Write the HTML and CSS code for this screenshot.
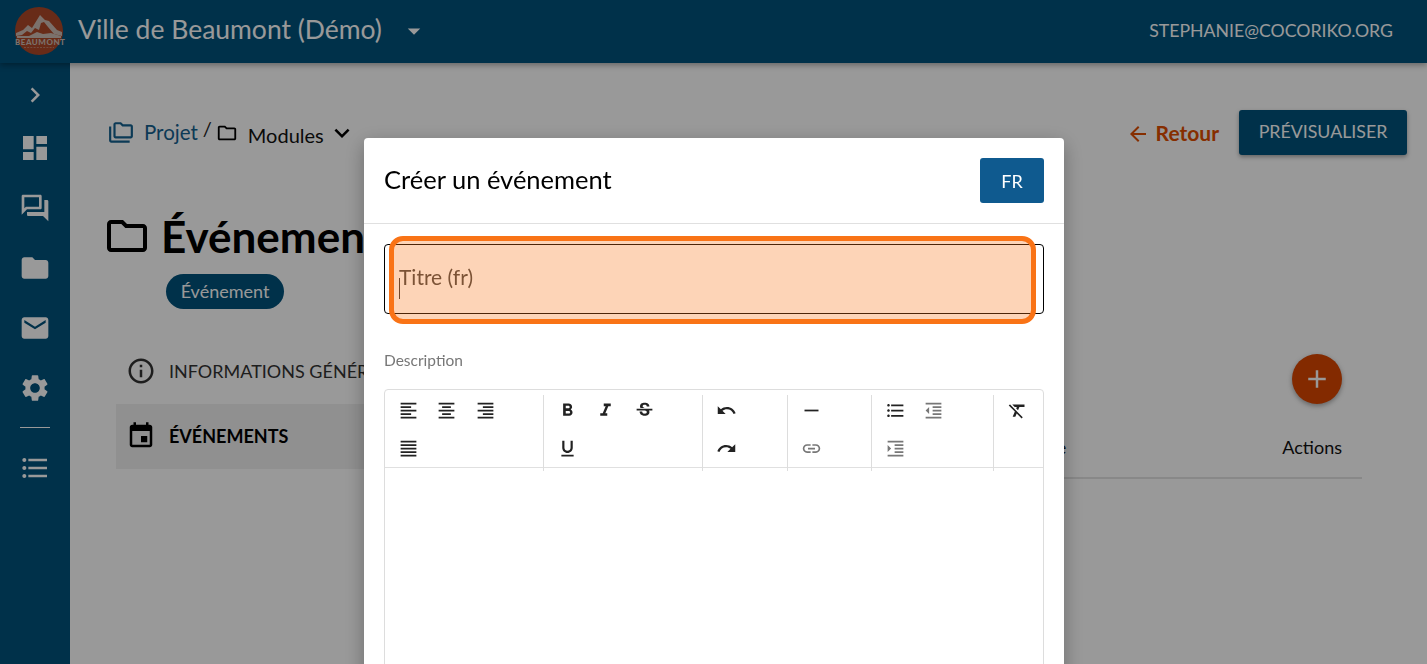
FILE: index.html
```html
<!DOCTYPE html>
<html lang="fr">
<head>
<meta charset="utf-8">
<title>Créer un événement</title>
<link rel="stylesheet" href="styles.css">
</head>
<body>
<svg class="sprite" aria-hidden="true">
  <symbol id="i-dash" viewBox="0 0 24 24"><path d="M3 13h8V3H3v10zm0 8h8v-6H3v6zm10 0h8V11h-8v10zm0-18v6h8V3h-8z"/></symbol>
  <symbol id="i-forum" viewBox="0 0 24 24"><path d="M15 4v7H5.17L4 12.17V4h11m1-2H3c-.55 0-1 .45-1 1v14l4-4h10c.55 0 1-.45 1-1V3c0-.55-.45-1-1-1zm5 4h-2v9H6v2c0 .55.45 1 1 1h11l4 4V7c0-.55-.45-1-1-1z"/></symbol>
  <symbol id="i-folder" viewBox="0 0 24 24"><path d="M10 4H4c-1.1 0-1.99.9-1.99 2L2 18c0 1.1.9 2 2 2h16c1.1 0 2-.9 2-2V8c0-1.1-.9-2-2-2h-8l-2-2z"/></symbol>
  <symbol id="i-folder-o" viewBox="0 0 24 24"><path d="M9.17 6l2 2H20v10H4V6h5.17M10 4H4c-1.1 0-1.99.9-1.99 2L2 18c0 1.1.9 2 2 2h16c1.1 0 2-.9 2-2V8c0-1.1-.9-2-2-2h-8l-2-2z"/></symbol>
  <symbol id="i-folder-copy" viewBox="0 0 24 24"><path d="M3 19h17v2H3c-1.1 0-2-.9-2-2V6h2v13zM23 6v9c0 1.1-.9 2-2 2H7c-1.1 0-2-.9-2-2L5.01 4c0-1.1.89-2 1.99-2h5l2 2h7c1.1 0 2 .9 2 2zM7 15h14V6h-7.83l-2-2H7v11z"/></symbol>
  <symbol id="i-mail" viewBox="0 0 24 24"><path d="M20 4H4c-1.1 0-1.99.9-1.99 2L2 18c0 1.1.9 2 2 2h16c1.1 0 2-.9 2-2V6c0-1.1-.9-2-2-2zm0 4l-8 5-8-5V6l8 5 8-5v2z"/></symbol>
  <symbol id="i-gear" viewBox="0 0 24 24"><path d="M19.14 12.94c.04-.3.06-.61.06-.94 0-.32-.02-.64-.07-.94l2.03-1.58c.18-.14.23-.41.12-.61l-1.92-3.32c-.12-.22-.37-.29-.59-.22l-2.39.96c-.5-.38-1.03-.7-1.62-.94l-.36-2.54c-.04-.24-.24-.41-.48-.41h-3.84c-.24 0-.43.17-.47.41l-.36 2.54c-.59.24-1.13.57-1.62.94l-2.39-.96c-.22-.08-.47 0-.59.22L2.74 8.87c-.12.21-.08.47.12.61l2.03 1.58c-.05.3-.09.63-.09.94s.02.64.07.94l-2.03 1.58c-.18.14-.23.41-.12.61l1.92 3.32c.12.22.37.29.59.22l2.39-.96c.5.38 1.03.7 1.62.94l.36 2.54c.05.24.24.41.48.41h3.84c.24 0 .44-.17.47-.41l.36-2.54c.59-.24 1.13-.56 1.62-.94l2.39.96c.22.08.47 0 .59-.22l1.92-3.32c.12-.22.07-.47-.12-.61l-2.01-1.58zM12 15.6c-1.98 0-3.6-1.62-3.6-3.6s1.62-3.6 3.6-3.6 3.6 1.62 3.6 3.6-1.62 3.6-3.6 3.6z"/></symbol>
  <symbol id="i-list" viewBox="0 0 24 24"><path d="M4 10.5c-.83 0-1.5.67-1.5 1.5s.67 1.5 1.5 1.5 1.5-.67 1.5-1.5-.67-1.5-1.5-1.5zm0-6c-.83 0-1.5.67-1.5 1.5S3.17 7.5 4 7.5 5.5 6.83 5.5 6 4.83 4.5 4 4.5zm0 12c-.83 0-1.5.68-1.5 1.5s.68 1.5 1.5 1.5 1.5-.68 1.5-1.5-.67-1.5-1.5-1.5zM7 19h14v-2H7v2zm0-6h14v-2H7v2zm0-8v2h14V5H7z"/></symbol>
  <symbol id="i-chev" viewBox="0 0 24 24"><path d="M10 6L8.59 7.41 13.17 12l-4.58 4.59L10 18l6-6z"/></symbol>
  <symbol id="i-more" viewBox="0 0 24 24"><path d="M16.59 8.59L12 13.17 7.41 8.59 6 10l6 6 6-6z"/></symbol>
  <symbol id="i-drop" viewBox="0 0 24 24"><path d="M7 10l5 5 5-5z"/></symbol>
  <symbol id="i-back" viewBox="0 0 24 24"><path d="M20 11H7.83l5.59-5.59L12 4l-8 8 8 8 1.41-1.41L7.83 13H20v-2z"/></symbol>
  <symbol id="i-info" viewBox="0 0 24 24"><path d="M11 7h2v2h-2zm0 4h2v6h-2zm1-9C6.48 2 2 6.48 2 12s4.48 10 10 10 10-4.48 10-10S17.52 2 12 2zm0 18c-4.41 0-8-3.59-8-8s3.59-8 8-8 8 3.59 8 8-3.59 8-8 8z"/></symbol>
  <symbol id="i-event" viewBox="0 0 24 24"><path d="M17 12h-5v5h5v-5zM16 1v2H8V1H6v2H5c-1.11 0-1.99.9-1.99 2L3 19c0 1.1.89 2 2 2h14c1.1 0 2-.9 2-2V5c0-1.1-.9-2-2-2h-1V1h-2zm3 18H5V8h14v11z"/></symbol>
  <symbol id="i-add" viewBox="0 0 24 24"><path d="M19 13h-6v6h-2v-6H5v-2h6V5h2v6h6v2z"/></symbol>
  <symbol id="e-left" viewBox="0 0 24 24"><path d="M15 15H3v2h12v-2zm0-8H3v2h12V7zM3 13h18v-2H3v2zm0 8h18v-2H3v2zM3 3v2h18V3H3z"/></symbol>
  <symbol id="e-center" viewBox="0 0 24 24"><path d="M7 15v2h10v-2H7zm-4 6h18v-2H3v2zm0-8h18v-2H3v2zm4-6v2h10V7H7zM3 3v2h18V3H3z"/></symbol>
  <symbol id="e-right" viewBox="0 0 24 24"><path d="M3 21h18v-2H3v2zm6-4h12v-2H9v2zm-6-4h18v-2H3v2zm6-4h12V7H9v2zM3 3v2h18V3H3z"/></symbol>
  <symbol id="e-just" viewBox="0 0 24 24"><path d="M3 21h18v-2H3v2zm0-4h18v-2H3v2zm0-4h18v-2H3v2zm0-4h18V7H3v2zm0-6v2h18V3H3z"/></symbol>
  <symbol id="e-bold" viewBox="0 0 24 24"><path d="M15.6 10.79c.97-.67 1.65-1.77 1.65-2.79 0-2.26-1.75-4-4-4H7v14h7.04c2.09 0 3.71-1.7 3.71-3.79 0-1.52-.86-2.82-2.15-3.42zM10 6.5h3c.83 0 1.5.67 1.5 1.5s-.67 1.5-1.5 1.5h-3v-3zm3.5 9H10v-3h3.5c.83 0 1.5.67 1.5 1.5s-.67 1.5-1.5 1.5z"/></symbol>
  <symbol id="e-italic" viewBox="0 0 24 24"><path d="M10 4v3h2.21l-3.42 8H6v3h8v-3h-2.21l3.42-8H18V4z"/></symbol>
  <symbol id="e-strike" viewBox="0 0 24 24"><path d="M7.24 8.75c-.26-.48-.39-1.03-.39-1.67 0-.61.13-1.16.4-1.67.26-.5.63-.93 1.11-1.29.48-.35 1.05-.63 1.7-.83.66-.19 1.39-.29 2.18-.29.81 0 1.54.11 2.21.34.66.22 1.23.54 1.69.94.47.4.83.88 1.08 1.43.25.55.38 1.15.38 1.81h-3.01c0-.31-.05-.59-.15-.85-.09-.27-.24-.49-.44-.68-.2-.19-.45-.33-.75-.44-.3-.1-.66-.16-1.06-.16-.39 0-.74.04-1.03.13-.29.09-.53.21-.72.36-.19.16-.34.34-.44.55-.1.21-.15.43-.15.66 0 .48.25.88.74 1.21.38.25.77.48 1.41.7H7.39c-.05-.08-.11-.17-.15-.25zM21 12v-2H3v2h9.62c.18.07.4.14.55.2.37.17.66.34.87.51.21.17.35.36.43.57.07.2.11.43.11.69 0 .23-.05.45-.14.66-.09.2-.23.38-.42.53-.19.15-.42.26-.71.35-.29.08-.63.13-1.01.13-.43 0-.83-.04-1.18-.13s-.66-.23-.91-.42c-.25-.19-.45-.44-.59-.75-.14-.31-.25-.76-.25-1.21H6.4c0 .55.08 1.13.24 1.58.16.45.37.85.65 1.21.28.35.6.66.98.92.37.26.78.48 1.22.65.44.17.9.3 1.38.39.48.08.96.13 1.44.13.8 0 1.53-.09 2.18-.28s1.21-.45 1.67-.79c.46-.34.82-.77 1.07-1.27s.38-1.07.38-1.71c0-.6-.1-1.14-.31-1.61-.05-.11-.11-.23-.17-.33H21z"/></symbol>
  <symbol id="e-under" viewBox="0 0 24 24"><path d="M12 17c3.31 0 6-2.69 6-6V3h-2.5v8c0 1.93-1.57 3.5-3.5 3.5S8.5 12.93 8.5 11V3H6v8c0 3.31 2.69 6 6 6zm-7 2v2h14v-2H5z"/></symbol>
  <symbol id="e-undo" viewBox="0 0 24 24"><path d="M12.5 8c-2.65 0-5.05.99-6.9 2.6L2 7v9h9l-3.62-3.62c1.39-1.16 3.16-1.88 5.12-1.88 3.54 0 6.55 2.31 7.6 5.5l2.37-.78C21.08 11.03 17.15 8 12.5 8z"/></symbol>
  <symbol id="e-redo" viewBox="0 0 24 24"><path d="M18.4 10.6C16.55 8.99 14.15 8 11.5 8c-4.65 0-8.58 3.03-9.96 7.22L3.9 16c1.05-3.19 4.05-5.5 7.6-5.5 1.95 0 3.73.72 5.12 1.88L13 16h9V7l-3.6 3.6z"/></symbol>
  <symbol id="e-hr" viewBox="0 0 24 24"><path d="M4 11h16v2H4z"/></symbol>
  <symbol id="e-link" viewBox="0 0 24 24"><path d="M3.9 12c0-1.71 1.39-3.1 3.1-3.1h4V7H7c-2.76 0-5 2.24-5 5s2.24 5 5 5h4v-1.9H7c-1.71 0-3.1-1.39-3.1-3.1zM8 13h8v-2H8v2zm9-6h-4v1.9h4c1.71 0 3.1 1.39 3.1 3.1s-1.39 3.1-3.1 3.1h-4V17h4c2.76 0 5-2.24 5-5s-2.24-5-5-5z"/></symbol>
  <symbol id="e-outdent" viewBox="0 0 24 24"><path d="M11 17h10v-2H11v2zm-8-5l4 4V8l-4 4zm0 9h18v-2H3v2zM3 3v2h18V3H3zm8 6h10V7H11v2zm0 4h10v-2H11v2z"/></symbol>
  <symbol id="e-indent" viewBox="0 0 24 24"><path d="M3 21h18v-2H3v2zM3 8v8l4-4-4-4zm8 9h10v-2H11v2zM3 3v2h18V3H3zm8 6h10V7H11v2zm0 4h10v-2H11v2z"/></symbol>
  <symbol id="e-clear" viewBox="0 0 24 24"><path d="M3.27 5L2 6.27l6.97 6.97L6.5 19h3l1.57-3.66L16.73 21 18 19.73 3.55 5.27 3.27 5zM6 5v.18L8.82 8h2.4l-.72 1.68 2.1 2.1L14.21 8H20V5H6z"/></symbol>
</svg>

<header class="topbar">
  <div class="logo">
    <svg class="logo-art" viewBox="0 0 48 48">
      <circle cx="24" cy="24" r="24" fill="#ae4828"/>
      <path d="M1 26 L8 23 L13 18 L17 21 L25 8 L30 13 L34 14 L42 23 L47 25 L47 29 L39 27 L33 20 L29 15 L26 16 L24 23 L20 21 L16 26 L12 24 L7 28 L1 29 Z" fill="#cdbcb4"/>
      <path d="M14 29 L22 25 L28 27 L36 26 L46 29 L46 31 L2 31 L2 29 Z" fill="#cdbcb4"/>
      <path d="M8 46 H40" stroke="none"/>
      <path d="M9 40.500 H39" stroke="#cdbcb4" stroke-width=".8" stroke-dasharray="2 1.2" opacity=".6"/>
    </svg>
    <span class="logo-name">BEAUMONT</span>
  </div>
  <span class="org">Ville de Beaumont (Démo)</span>
  <svg class="org-drop"><use href="#i-drop"/></svg>
  <span class="user">STEPHANIE@COCORIKO.ORG</span>
</header>

<div class="shell">
  <nav class="sidebar">
    <svg class="side-chev"><use href="#i-chev"/></svg>
    <svg class="side-icon"><use href="#i-dash"/></svg>
    <svg class="side-icon"><use href="#i-forum"/></svg>
    <svg class="side-icon"><use href="#i-folder"/></svg>
    <svg class="side-icon"><use href="#i-mail"/></svg>
    <svg class="side-icon"><use href="#i-gear"/></svg>
    <div class="side-rule"></div>
    <svg class="side-icon side-last"><use href="#i-list"/></svg>
  </nav>

  <main class="main">
    <div class="crumbbar">
      <div class="crumbs">
        <svg class="crumb-copy"><use href="#i-folder-copy"/></svg>
        <a class="crumb-link">Projet</a>
        <span class="crumb-sep">/</span>
        <svg class="crumb-folder"><use href="#i-folder-o"/></svg>
        <span class="crumb-current">Modules</span>
        <svg class="crumb-more"><use href="#i-more"/></svg>
      </div>
      <div class="actions">
        <a class="back"><svg class="back-icon"><use href="#i-back"/></svg>Retour</a>
        <button class="preview">PRÉVISUALISER</button>
      </div>
    </div>

    <div class="title-row">
      <svg class="title-icon"><use href="#i-folder-o"/></svg>
      <h1 class="title">Événements</h1>
    </div>
    <span class="chip">Événement</span>

    <div class="content">
      <ul class="tabs">
        <li class="tab"><svg class="tab-icon"><use href="#i-info"/></svg>INFORMATIONS GÉNÉRALES</li>
        <li class="tab tab-active"><svg class="tab-icon"><use href="#i-event"/></svg>ÉVÉNEMENTS</li>
      </ul>
      <section class="panel">
        <button class="fab"><svg class="fab-icon"><use href="#i-add"/></svg></button>
        <div class="table-head">
          <span class="th-date">Date</span>
          <span class="th-actions">Actions</span>
        </div>
      </section>
    </div>
  </main>
</div>

<div class="overlay">
  <div class="modal">
    <div class="modal-head">
      <h2 class="modal-title">Créer un événement</h2>
      <button class="lang">FR</button>
    </div>
    <div class="modal-body">
      <div class="field">
        <div class="input"><span class="caret"></span><span class="placeholder">Titre (fr)</span></div>
        <div class="highlight"></div>
      </div>
      <label class="desc">Description</label>
      <div class="editor">
        <div class="toolbar">
          <div class="group">
            <span class="tool"><svg><use href="#e-left"/></svg></span>
            <span class="tool"><svg><use href="#e-center"/></svg></span>
            <span class="tool"><svg><use href="#e-right"/></svg></span>
            <span class="tool"><svg><use href="#e-just"/></svg></span>
          </div>
          <div class="group">
            <span class="tool"><svg><use href="#e-bold"/></svg></span>
            <span class="tool"><svg><use href="#e-italic"/></svg></span>
            <span class="tool"><svg><use href="#e-strike"/></svg></span>
            <span class="tool"><svg><use href="#e-under"/></svg></span>
          </div>
          <div class="group">
            <span class="tool"><svg><use href="#e-undo"/></svg></span>
            <span class="tool"><svg><use href="#e-redo"/></svg></span>
          </div>
          <div class="group">
            <span class="tool"><svg><use href="#e-hr"/></svg></span>
            <span class="tool tool-off"><svg><use href="#e-link"/></svg></span>
          </div>
          <div class="group">
            <span class="tool"><svg><use href="#i-list"/></svg></span>
            <span class="tool tool-off"><svg><use href="#e-outdent"/></svg></span>
            <span class="tool tool-off"><svg><use href="#e-indent"/></svg></span>
          </div>
          <div class="group">
            <span class="tool"><svg><use href="#e-clear"/></svg></span>
          </div>
        </div>
        <div class="editor-body"></div>
      </div>
    </div>
  </div>
</div>
</body>
</html>
```
FILE: styles.css
```css
* { box-sizing: border-box; }
html, body { height: 100%; }
body {
  margin: 0;
  height: 664px;
  overflow: hidden;
  font-family: "Lato", "Liberation Sans", sans-serif;
  background: #fff;
  color: #000;
  display: flex;
  flex-direction: column;
}
.sprite { display: none; }
svg { fill: currentColor; display: block; flex: none; }

.topbar {
  flex: none;
  height: 63px;
  background: #00527c;
  color: #fff;
  display: flex;
  align-items: center;
  padding: 0 34px 0 15px;
  box-shadow: 0 2px 6px rgba(0, 0, 0, .35);
  position: relative;
  z-index: 1;
}
.logo { width: 48px; height: 48px; position: relative; z-index: 3; flex: none; margin-top: -1px; }
.logo-art { width: 48px; height: 48px; }
.logo-name {
  position: absolute;
  left: 0;
  right: 0;
  top: 31px;
  text-align: center;
  font-size: 8px;
  line-height: 9px;
  font-weight: 900;
  letter-spacing: .5px;
  color: #cdbcb4;
}
.org { font-size: 26.5px; line-height: 32px; margin-left: 15px; margin-top: -5px; }
.org-drop { width: 30px; height: 30px; margin-left: 17px; margin-top: -1px; }
.user { margin-left: auto; font-size: 17.7px; margin-top: -2px; }

.shell { flex: 1; min-height: 0; display: flex; }
.sidebar {
  width: 70px;
  flex: none;
  background: #00527c;
  color: #fff;
  display: flex;
  flex-direction: column;
  align-items: center;
  padding-top: 17px;
}
.side-chev { width: 30px; height: 30px; margin-bottom: 22px; }
.side-icon { width: 32px; height: 32px; margin-bottom: 28px; }
.side-rule { width: 30px; height: 1px; background: #fff; margin: -5px 0 24px; }
.side-last { margin-bottom: 0; }

.main { flex: 1; min-width: 0; padding: 47px 20px 0 38px; display: flex; flex-direction: column; }
.crumbbar { display: flex; justify-content: space-between; align-items: flex-start; }
.crumbs { display: flex; align-items: center; height: 46px; }
.crumb-copy { width: 26px; height: 26px; color: #14618f; margin-right: 10px; margin-top: -1px; }
.crumb-link { font-size: 20.5px; color: #14618f; margin-top: -2px; }
.crumb-sep { font-size: 20px; margin: -10px 4px 0 5px; color: #222; }
.crumb-folder { width: 22px; height: 22px; margin-right: 10px; }
.crumb-current { font-size: 20px; margin-top: 4px; color: #111; }
.crumb-more { width: 30px; height: 30px; margin-left: 3px; margin-top: -1px; }

.actions { display: flex; align-items: center; height: 45px; }
.back { display: flex; align-items: center; font-size: 21px; font-weight: 700; color: #e04e00; margin-right: 20px; }
.back-icon { width: 24px; height: 24px; margin-right: 6px; margin-top: 3px; margin-left: -2px; }
.preview {
  width: 168px;
  height: 45px;
  border: 0;
  border-radius: 3px;
  background: #00527c;
  color: #fff;
  font: 400 17.8px "Lato", sans-serif;
  padding: 0 0 4px;
  box-shadow: 0 2px 4px rgba(0, 0, 0, .35);
}

.title-row { display: flex; align-items: center; margin-top: 50px; margin-left: -5px; height: 60px; }
.title-icon { width: 48px; height: 48px; }
.title { margin: 0 0 0 10px; font-size: 44px; line-height: 56px; font-weight: 700; white-space: nowrap; }
.chip {
  align-self: flex-start;
  margin: 8px 0 0 58px;
  height: 35px;
  width: 118px;
  border-radius: 18px;
  background: #00527c;
  color: #fff;
  font-size: 18px;
  line-height: 35px;
  text-align: center;
}

.content { display: flex; margin-top: 30px; margin-right: 45px; margin-left: 8px; }
.tabs { list-style: none; margin: 0; padding: 0; width: 320px; flex: none; }
.tab {
  height: 65px;
  display: flex;
  align-items: center;
  font-size: 18px;
  color: #333;
  white-space: nowrap;
  padding: 0 0 2px 10px;
  overflow: hidden;
}
.tab-active { background: #f0f0f0; font-weight: 700; color: #000; }
.tab-icon { width: 30px; height: 30px; margin-right: 13px; }

.panel { flex: 1; min-width: 0; display: flex; flex-direction: column; }
.fab {
  align-self: flex-end;
  width: 50px;
  height: 50px;
  margin: 15px 20px 0 0;
  border: 0;
  border-radius: 50%;
  background: #da4600;
  color: #fff;
  padding: 10px;
  box-shadow: 0 2px 5px rgba(0, 0, 0, .35);
}
.fab-icon { width: 30px; height: 30px; }
.table-head {
  height: 65px;
  margin-top: 10px;
  border-bottom: 2px solid #e3e3e3;
  display: flex;
  justify-content: flex-end;
  align-items: center;
  font-size: 18px;
  color: #111;
  padding: 3px 20px 0 0;
}
.th-date { margin-right: 216px; }

.overlay {
  position: fixed;
  inset: 0;
  z-index: 2;
  background: rgba(0, 0, 0, .4);
  display: flex;
  justify-content: center;
  align-items: flex-start;
  padding: 138px 0 0 1px;
}
.modal {
  width: 700px;
  min-height: 900px;
  background: #fff;
  border-radius: 4px;
  box-shadow: 0 6px 20px rgba(0, 0, 0, .3);
}
.modal-head {
  height: 86px;
  border-bottom: 1px solid #e0e0e0;
  display: flex;
  justify-content: space-between;
  align-items: center;
  padding: 0 20px;
}
.modal-title { margin: -4px 0 0; font-size: 25.5px; font-weight: 400; }
.lang {
  width: 64px;
  height: 45px;
  border: 0;
  border-radius: 3px;
  background: #0f5a8f;
  color: #fff;
  font: 400 18px "Lato", sans-serif;
}
.modal-body { padding: 20px; }
.field { position: relative; }
.input {
  height: 70px;
  border: 1px solid #000;
  border-radius: 4px;
  position: relative;
  padding: 19px 0 0 14px;
  font-size: 21px;
  line-height: 26px;
  color: #444;
}
.caret { position: absolute; left: 14px; top: 33px; width: 1px; height: 21px; background: #333; }
.highlight {
  position: absolute;
  left: 5px;
  top: -8px;
  width: 647px;
  height: 88px;
  border: 5px solid #f97316;
  border-radius: 14px;
  background: rgba(249, 115, 22, .31);
}
.desc { display: block; margin-top: 37px; font-size: 15.5px; line-height: 18px; color: #777; }
.editor { margin-top: 20px; border: 1px solid #ddd; border-radius: 4px; }
.toolbar {
  display: grid;
  grid-template-columns: 159px 159px 85px 84px 122px 1fr;
  padding: 5px 0 5px;
  height: 78px;
  border-bottom: 1px solid #e0e0e0;
}
.group {
  display: flex;
  flex-wrap: wrap;
  align-content: flex-start;
  padding: 0 10px 0 4px;
  margin-top: 0;
  border-right: 1px solid #ddd;
}
.group:last-child { border-right: 0; }
.tool { width: 38.6px; height: 38px; margin-top: -4px; margin-bottom: 4px; display: flex; align-items: center; justify-content: center; color: #222; }
.tool-off { color: #777; }
.tool svg { width: 21px; height: 21px; }
.editor-body { height: 400px; }
```
